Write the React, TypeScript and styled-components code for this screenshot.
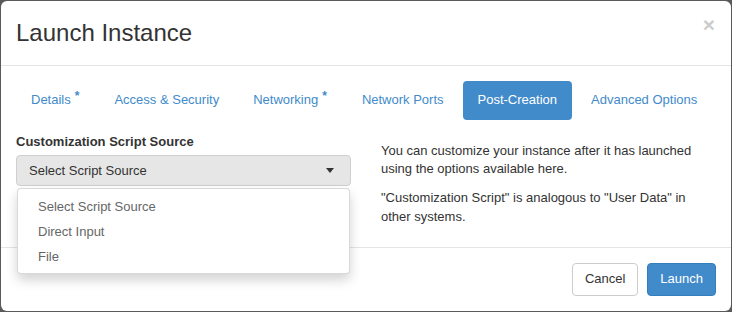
import styled, { createGlobalStyle } from 'styled-components'

const GlobalStyle = createGlobalStyle`
  html, body {
    margin: 0;
    padding: 0;
    background: #5a5a5a;
  }
  body {
    font-family: "Liberation Sans", Arial, sans-serif;
    font-size: 13px;
    line-height: 1.42857;
    color: #333;
  }
`

const Modal = styled.div`
  width: 730px;
  height: 310px;
  margin: 1px;
  background: #fff;
  border-radius: 6px;
  display: flex;
  flex-direction: column;
  overflow: hidden;
`

const Header = styled.div`
  display: flex;
  align-items: flex-start;
  justify-content: space-between;
  padding: 15px;
  border-bottom: 1px solid #e5e5e5;
`

const Title = styled.h4`
  margin: 0;
  font-size: 24px;
  font-weight: normal;
  line-height: 1.42857;
  color: #333;
`

const Close = styled.button`
  border: 0;
  background: transparent;
  padding: 0;
  margin-top: -2px;
  margin-right: 1px;
  font-family: "Liberation Sans", Arial, sans-serif;
  font-size: 21px;
  font-weight: bold;
  line-height: 1;
  color: #000;
  opacity: 0.2;
  cursor: pointer;
`

const Body = styled.div`
  padding: 15px;
  height: 151px;
`

const Pills = styled.ul`
  display: flex;
  gap: 4px;
  list-style: none;
  margin: 0 0 13px;
  padding: 0;
`

const Pill = styled.li<{ $active?: boolean }>`
  padding: 10px 15px;
  border-radius: 4px;
  color: ${(p) => (p.$active ? '#fff' : '#428bca')};
  background: ${(p) => (p.$active ? '#428bca' : 'transparent')};
  white-space: nowrap;
  cursor: pointer;
`

const Required = styled.sup`
  margin-left: 4px;
  margin-right: 1px;
  font-size: 12px;
  font-weight: bold;
  line-height: 0;
  vertical-align: 4px;
  color: #428bca;
`

const Columns = styled.div`
  display: grid;
  grid-template-columns: 1fr 1fr;
  margin: 0 -15px;
`

const Column = styled.div<{ $offset?: number }>`
  padding: ${(p) => p.$offset ?? 0}px 15px 0;
`

const Label = styled.label`
  display: block;
  font-weight: bold;
  margin-bottom: 4px;
`

const Dropdown = styled.div`
  position: relative;
`

const Toggle = styled.div`
  display: flex;
  align-items: center;
  justify-content: space-between;
  height: 31px;
  box-sizing: border-box;
  padding: 0 16px 0 12px;
  background: #e6e6e6;
  border: 1px solid #cfcfcf;
  border-radius: 4px;
  color: #333;
`

const Caret = styled.span`
  width: 0;
  height: 0;
  border-left: 4px solid transparent;
  border-right: 4px solid transparent;
  border-top: 5px solid #333;
`

const Menu = styled.ul`
  position: absolute;
  top: 100%;
  left: 1px;
  right: 1px;
  z-index: 10;
  margin: 2px 0 0;
  padding: 6px 0 4px;
  list-style: none;
  background: #fff;
  border: 1px solid rgba(0, 0, 0, 0.15);
  border-radius: 4px;
  box-shadow: 0 6px 12px rgba(0, 0, 0, 0.175);
`

const MenuItem = styled.li`
  padding: 3px 20px;
  color: #666;
`

const Help = styled.p`
  margin: 0 0 10px;
  color: #333;
`

const Footer = styled.div`
  display: flex;
  justify-content: flex-end;
  gap: 9px;
  padding: 15px;
  border-top: 1px solid #e5e5e5;
`

const Button = styled.button<{ $primary?: boolean }>`
  padding: 6px 12px;
  font-family: inherit;
  font-size: 13px;
  line-height: 1.42857;
  border-radius: 4px;
  border: 1px solid ${(p) => (p.$primary ? '#357ebd' : '#ccc')};
  background: ${(p) => (p.$primary ? '#428bca' : '#fff')};
  color: ${(p) => (p.$primary ? '#fff' : '#333')};
  cursor: pointer;
`

const tabs = [
  { name: 'Details', required: true },
  { name: 'Access & Security' },
  { name: 'Networking', required: true },
  { name: 'Network Ports' },
  { name: 'Post-Creation', active: true },
  { name: 'Advanced Options' },
]

const sources = ['Select Script Source', 'Direct Input', 'File']

export default function App() {
  return (
    <>
      <GlobalStyle />
      <Modal>
        <Header>
          <Title>Launch Instance</Title>
          <Close aria-label="Close">×</Close>
        </Header>
        <Body>
          <Pills>
            {tabs.map((t) => (
              <Pill key={t.name} $active={t.active}>
                {t.name}
                {t.required && <Required>*</Required>}
              </Pill>
            ))}
          </Pills>
          <Columns>
            <Column>
              <Label>Customization Script Source</Label>
              <Dropdown>
                <Toggle>
                  Select Script Source
                  <Caret />
                </Toggle>
                <Menu>
                  {sources.map((s) => (
                    <MenuItem key={s}>{s}</MenuItem>
                  ))}
                </Menu>
              </Dropdown>
            </Column>
            <Column $offset={9}>
              <Help>
                You can customize your instance after it has launched using the options available here.
              </Help>
              <Help>"Customization Script" is analogous to "User Data" in other systems.</Help>
            </Column>
          </Columns>
        </Body>
        <Footer>
          <Button>Cancel</Button>
          <Button $primary>Launch</Button>
        </Footer>
      </Modal>
    </>
  )
}
